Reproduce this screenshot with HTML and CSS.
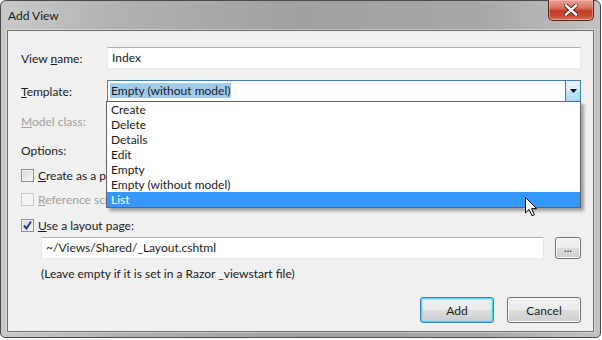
FILE: index.html
```html
<!DOCTYPE html>
<html lang="en">
<head>
  <meta charset="UTF-8">
  <title>Add View</title>
  <link rel="stylesheet" href="styles.css">
</head>
<body>

  <div class="window">
    <div class="titlebar">
      <span class="title">Add View</span>
      <div class="close">
        <svg width="14" height="12" viewBox="0 0 14 12">
          <path d="M2 1.5 L12 10.5 M12 1.5 L2 10.5" stroke="#4a1e16" stroke-width="4.2" stroke-linecap="square"/>
          <path d="M2 1.5 L12 10.5 M12 1.5 L2 10.5" stroke="#ffffff" stroke-width="2.4" stroke-linecap="square"/>
        </svg>
      </div>
    </div>

    <div class="client">
      <div class="row field-row first">
        <span class="label">View <u>n</u>ame:</span>
        <div class="textbox">Index</div>
      </div>

      <div class="row field-row template-row">
        <span class="label"><u>T</u>emplate:</span>
        <div class="combo">
          <span class="combo-text"><span class="sel">Empty (without model)</span></span>
          <span class="combo-btn">
            <svg width="7" height="4" viewBox="0 0 7 4"><path d="M0 0 H7 L3.5 4 Z" fill="#000"/></svg>
          </span>
          <ul class="dropdown">
            <li>Create</li>
            <li>Delete</li>
            <li>Details</li>
            <li>Edit</li>
            <li>Empty</li>
            <li>Empty (without model)</li>
            <li class="hover">List</li>
          </ul>
        </div>
      </div>

      <div class="row field-row model-row">
        <span class="label disabled"><u>M</u>odel class:</span>
      </div>

      <div class="row text-row options-row">Options:</div>

      <div class="row check-row cb-partial">
        <span class="checkbox"></span>
        <span><u>C</u>reate as a partial view</span>
      </div>
      <div class="row check-row cb-scripts disabled">
        <span class="checkbox off"></span>
        <span><u>R</u>eference script libraries</span>
      </div>
      <div class="row check-row cb-layout">
        <span class="checkbox">
          <svg width="11" height="11" viewBox="0 0 11 11"><path d="M2 5.5 L4.5 8.5 L9 1.5" fill="none" stroke="#2b3f8a" stroke-width="2"/></svg>
        </span>
        <span><u>U</u>se a layout page:</span>
      </div>

      <div class="row layout-row">
        <div class="textbox">~/Views/Shared/_Layout.cshtml</div>
        <div class="button small">...</div>
      </div>

      <div class="row note">(Leave empty if it is set in a Razor _viewstart file)</div>

      <div class="row buttons">
        <div class="button default">Add</div>
        <div class="button">Cancel</div>
      </div>
    </div>

    <svg class="cursor" width="13" height="20" viewBox="0 0 13 20">
      <path d="M0.5 0.5 V16 L4.2 12.4 L7 18.8 L9.4 17.8 L6.7 11.6 H11.6 Z" fill="#ffffff" stroke="#000000" stroke-width="1"/>
    </svg>
  </div>

</body>
</html>
```

FILE: styles.css
```css
* {
  margin: 0;
  padding: 0;
  box-sizing: border-box;
}

body {
  font-family: "Segoe UI", Lato, "Liberation Sans", sans-serif;
  font-size: 12px;
  color: #1a1a1a;
  background: #ffffff;
}

.window {
  position: relative;
  width: 601px;
  height: 338px;
  border: 1px solid #4b4b4b;
  border-radius: 6px 6px 5px 5px;
  background: linear-gradient(90deg, #c9c9c9 0%, #b1b1b1 20%, #a0a0a0 50%, #a7a7a7 80%, #c2c2c2 100%);
  display: flex;
  flex-direction: column;
  padding: 0 6px 5px 6px;
}

.titlebar {
  height: 29px;
  display: flex;
  align-items: flex-start;
  margin: 0 -6px;
  padding: 0 6px 0 7px;
}

.title {
  line-height: 16px;
  padding-top: 7px;
  color: #141414;
  font-size: 12px;
  text-shadow: 0 0 8px rgba(255, 255, 255, 0.6);
}

.close {
  margin-left: auto;
  margin-top: -1px;
  width: 46px;
  height: 21px;
  border: 1px solid #5a241b;
  border-top: none;
  border-radius: 0 0 5px 5px;
  background: linear-gradient(180deg, #e9a494 0%, #d6735f 40%, #c13a24 55%, #c94a33 80%, #d77b62 100%);
  box-shadow: inset 0 0 0 1px rgba(255, 200, 190, 0.45);
  display: flex;
  align-items: center;
  justify-content: center;
}

.client {
  flex: 1;
  background: #f0f0f0;
  border: 1px solid #6e6e6e;
  box-shadow: 0 0 0 1px rgba(255, 255, 255, 0.35);
  display: flex;
  flex-direction: column;
  padding: 0 12px 0 13px;
}

.row {
  display: flex;
  align-items: center;
}

.field-row {
  height: 22px;
}

.first {
  margin-top: 16px;
}

.template-row {
  margin-top: 11px;
  position: relative;
  z-index: 2;
}

.model-row {
  margin-top: 8px;
}

.label {
  width: 86px;
  flex-shrink: 0;
}

.disabled {
  color: #a0a0a0;
}

.textbox {
  flex: 1;
  height: 22px;
  background: #ffffff;
  border: 1px solid #e3e9ef;
  border-top-color: #abadb3;
  padding-left: 4px;
  line-height: 20px;
}

.combo {
  flex: 1;
  height: 22px;
  position: relative;
  display: flex;
  background: #ffffff;
  border: 1px solid #3c7fb1;
}

.combo-text {
  flex: 1;
  padding: 1px 0 0 2px;
}

.sel {
  display: inline-block;
  background: #9fcbf0;
  line-height: 15px;
  padding: 0 1px;
  margin-top: 1px;
}

.combo-btn {
  width: 16px;
  margin: -1px -1px -1px 0;
  border: 1px solid #3c7fb1;
  background: linear-gradient(180deg, #e6f5fd 0%, #d9f0fc 45%, #bee6fd 50%, #a7d9f5 100%);
  display: flex;
  align-items: center;
  justify-content: center;
}

.dropdown {
  position: absolute;
  left: -2px;
  right: -1px;
  top: 20px;
  list-style: none;
  background: #ffffff;
  border: 1px solid #646464;
  box-shadow: 3px 3px 3px rgba(0, 0, 0, 0.35);
}

.dropdown li {
  height: 15px;
  line-height: 15px;
  padding-left: 4px;
}

.dropdown li.hover {
  background: #3399ff;
  color: #ffffff;
}

.text-row {
  height: 16px;
}

.options-row {
  margin-top: 10px;
}

.check-row {
  height: 16px;
  gap: 4px;
}

.cb-partial {
  margin-top: 9px;
}

.cb-scripts {
  margin-top: 8px;
}

.cb-layout {
  margin-top: 10px;
}

.checkbox {
  width: 13px;
  height: 13px;
  border: 1px solid #8e8f8f;
  background: linear-gradient(135deg, #d9dadb 0%, #f6f6f6 100%);
  box-shadow: inset 0 0 0 1px #f4f4f4;
  display: flex;
  align-items: center;
  justify-content: center;
}

.checkbox.off {
  border-color: #c8c8c8;
  background: #f4f4f4;
  box-shadow: none;
}

.layout-row {
  margin-top: 4px;
  padding-left: 20px;
  gap: 11px;
}

.note {
  margin-top: 7px;
  height: 15px;
  padding-left: 20px;
}

.button {
  width: 74px;
  height: 26px;
  border: 1px solid #707070;
  border-radius: 3px;
  background: linear-gradient(180deg, #f2f2f2 0%, #ebebeb 48%, #dddddd 50%, #cfcfcf 100%);
  box-shadow: inset 0 0 0 1px #fcfcfc;
  display: flex;
  align-items: center;
  justify-content: center;
}

.button.small {
  width: 26px;
  height: 22px;
  font-size: 11px;
  line-height: 1;
  padding-bottom: 2px;
}

.button.default {
  border-color: #3c7fb1;
  box-shadow: inset 0 0 0 1px #48d8fb, inset 0 0 2px 2px rgba(72, 216, 251, 0.35);
}

.buttons {
  margin-top: 16px;
  justify-content: flex-end;
  gap: 13px;
}

.cursor {
  position: absolute;
  left: 524px;
  top: 196px;
  z-index: 5;
}
```
